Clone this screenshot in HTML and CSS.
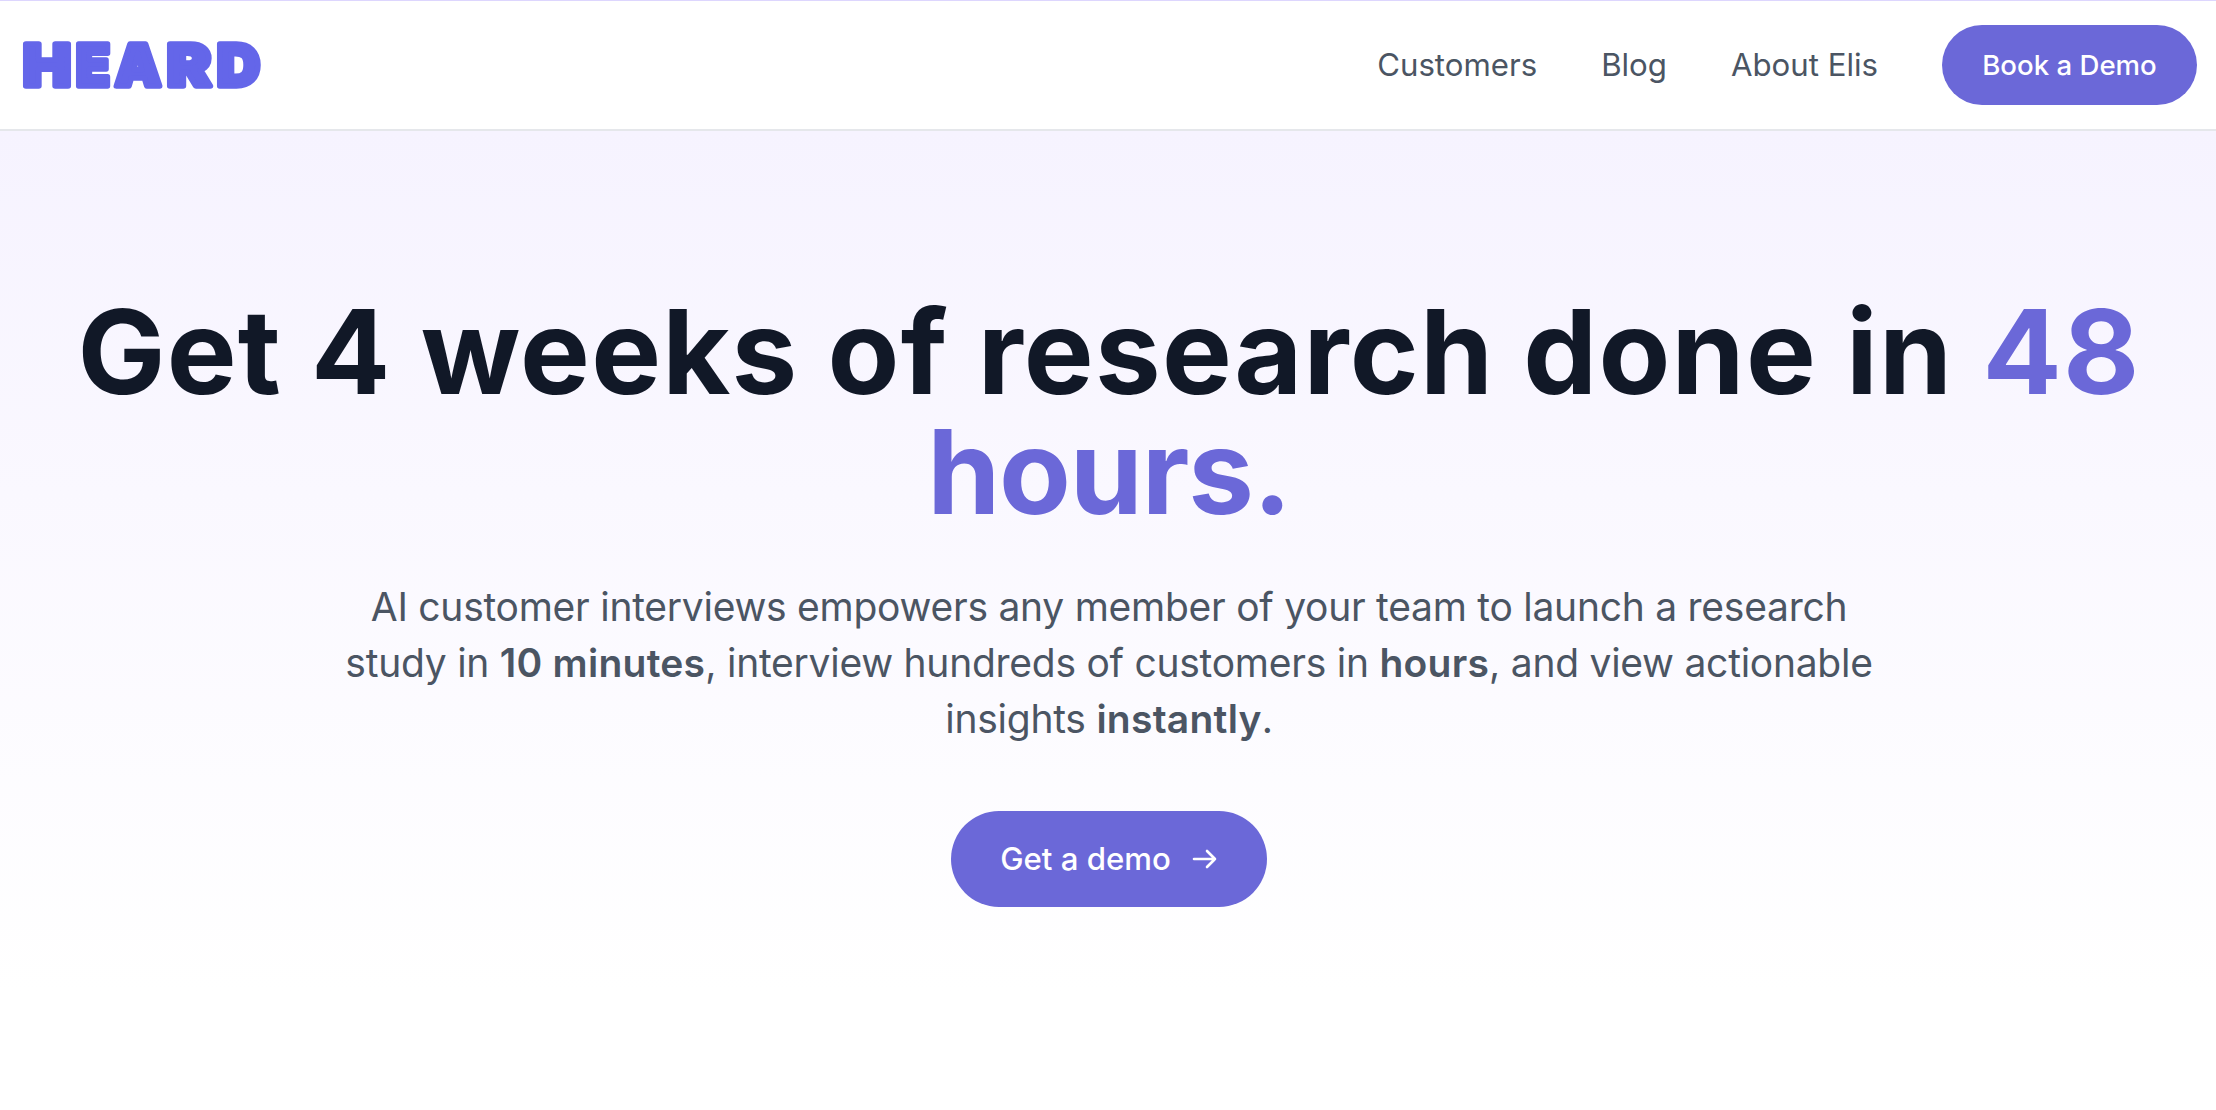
FILE: index.html
```html
<!DOCTYPE html>
<html lang="en">
<head>
    <meta charset="UTF-8">
    <meta name="viewport" content="width=device-width, initial-scale=1.0">
    <title>Heard</title>
    <link rel="stylesheet" href="styles.css">
</head>
<body>
    <!-- Header -->
    <header class="main-header">
        <a href="#" class="logo">
            <svg class="logo-mark" width="250" height="72" viewBox="0 0 250 72">
                <g class="logo-text">
                    <text x="0" y="57" textLength="48" lengthAdjust="spacingAndGlyphs">H</text>
                    <text x="53" y="57" textLength="34" lengthAdjust="spacingAndGlyphs">E</text>
                    <text x="92" y="57" textLength="46" lengthAdjust="spacingAndGlyphs">A</text>
                    <text x="144" y="57" textLength="44" lengthAdjust="spacingAndGlyphs">R</text>
                    <text x="194" y="57" textLength="43" lengthAdjust="spacingAndGlyphs">D</text>
                </g>
            </svg>
        </a>
        <nav class="nav-menu">
            <a href="#" class="nav-link">Customers</a>
            <a href="#" class="nav-link">Blog</a>
            <a href="#" class="nav-link">About Elis</a>
            <a href="#" class="btn btn-nav">Book a Demo</a>
        </nav>
    </header>

    <!-- Hero -->
    <section class="hero">
        <h1 class="hero-title">Get 4 weeks of research done in <span class="accent">48<br><span class="tight">hours.</span></span></h1>
        <p class="hero-text">
            AI customer interviews empowers any member of your team to launch a research<br>
            study in <strong>10 minutes</strong>, interview hundreds of customers in <strong>hours</strong>, and view actionable<br>
            insights <strong>instantly</strong>.
        </p>
        <a href="#" class="btn btn-hero">
            Get a demo
            <svg class="arrow" width="26" height="22" viewBox="0 0 26 22">
                <path d="M2 11H23M15 3L23 11L15 19"/>
            </svg>
        </a>
    </section>
</body>
</html>
```
FILE: styles.css
```css
:root {
    --primary: #6b68d8;
    --logo: #6466e9;
    --heading: #111827;
    --text: #4b5563;
}

* {
    box-sizing: border-box;
}

body {
    margin: 0;
    height: 1110px;
    overflow: hidden;
    background: #fff;
    color: var(--text);
    font-family: Inter, 'Liberation Sans', sans-serif;
    display: flex;
    flex-direction: column;
}

a {
    text-decoration: none;
}

/* Header */
.main-header {
    height: 131px;
    flex-shrink: 0;
    padding: 0 19px 0 23px;
    background: #fff;
    border-top: 1px solid #ddd6fe;
    border-bottom: 2px solid #e5e7eb;
    display: flex;
    justify-content: space-between;
    align-items: center;
}

.logo-mark {
    display: block;
    overflow: visible;
}

.logo-text {
    font-size: 58px;
    font-weight: 900;
    fill: var(--logo);
    stroke: var(--logo);
    stroke-width: 5.5px;
    stroke-linejoin: round;
}

.nav-menu {
    display: flex;
    align-items: center;
    gap: 64px;
}

.nav-link {
    color: var(--text);
    font-size: 31.2px;
    line-height: 48px;
}

/* Buttons */
.btn {
    display: flex;
    align-items: center;
    justify-content: center;
    background: var(--primary);
    color: #fff;
    font-weight: 500;
    border-radius: 48px;
}

.btn-nav {
    width: 255px;
    height: 80px;
    font-size: 27.6px;
}

.btn-hero {
    width: 316px;
    height: 96px;
    gap: 21px;
    font-size: 31.2px;
}

.arrow {
    fill: none;
    stroke: #fff;
    stroke-width: 2.6;
    stroke-linecap: round;
    stroke-linejoin: round;
}

/* Hero */
.hero {
    flex: 1;
    padding: 160px 0 0 2px;
    background: linear-gradient(to bottom, #f6f3ff, #faf8ff 37%, #fff 88%);
    display: flex;
    flex-direction: column;
    align-items: center;
    text-align: center;
}

.hero-title {
    margin: 0;
    color: var(--heading);
    font-size: 117.3px;
    font-weight: 700;
    line-height: 120px;
    letter-spacing: 1.25px;
    white-space: nowrap;
}

.accent {
    color: var(--primary);
}

.tight {
    letter-spacing: -1.2px;
}

.hero-text {
    margin: 48px 0 64px;
    font-size: 39px;
    line-height: 56px;
    letter-spacing: -0.26px;
    white-space: nowrap;
}

.hero-text strong {
    font-weight: 600;
    letter-spacing: 0.25px;
}
```
